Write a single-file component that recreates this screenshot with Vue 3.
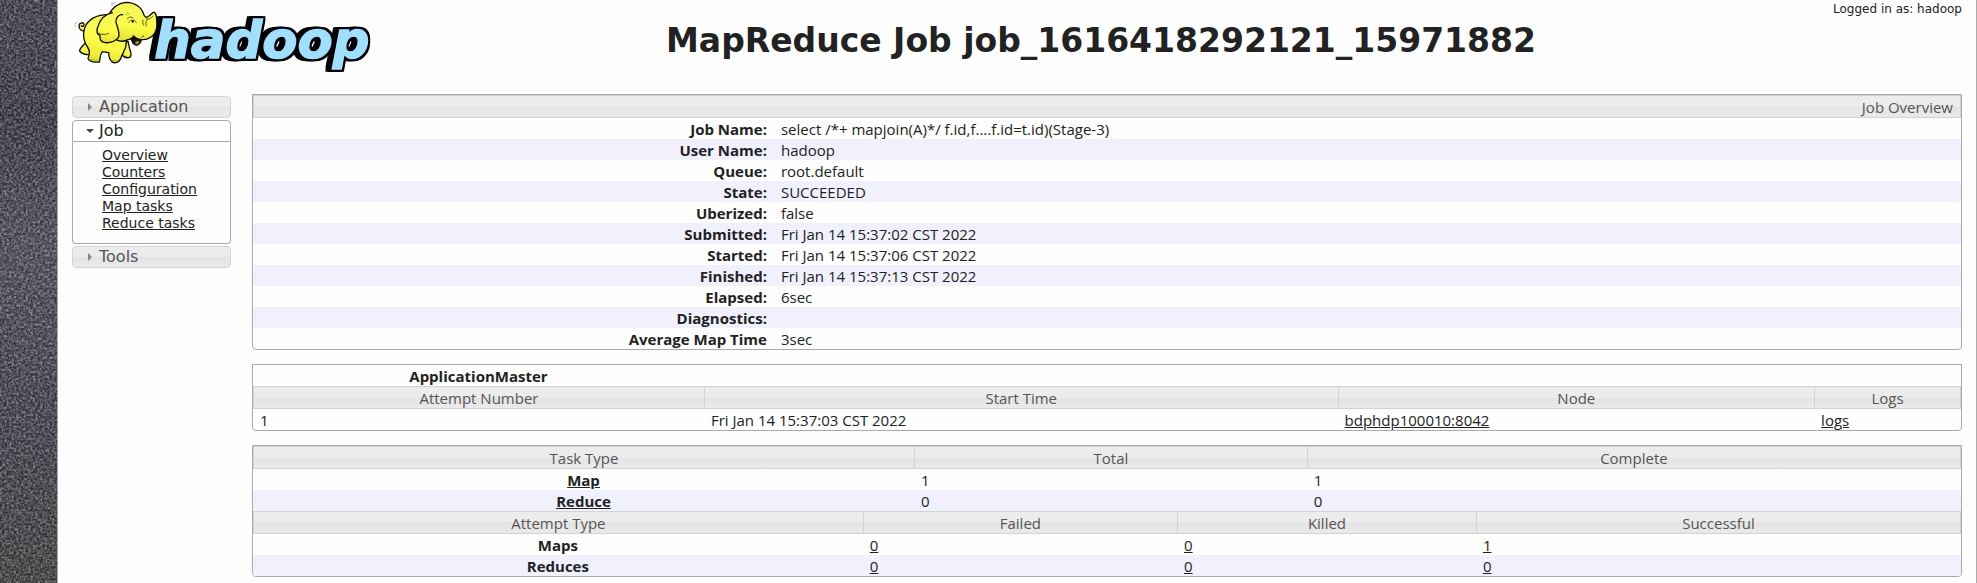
<script setup>
import { ref } from 'vue'

const jobOpen = ref(true)
const jobLinks = ['Overview', 'Counters', 'Configuration', 'Map tasks', 'Reduce tasks']

const overview = [
  ['Job Name:', 'select /*+ mapjoin(A)*/ f.id,f....f.id=t.id)(Stage-3)'],
  ['User Name:', 'hadoop'],
  ['Queue:', 'root.default'],
  ['State:', 'SUCCEEDED'],
  ['Uberized:', 'false'],
  ['Submitted:', 'Fri Jan 14 15:37:02 CST 2022'],
  ['Started:', 'Fri Jan 14 15:37:06 CST 2022'],
  ['Finished:', 'Fri Jan 14 15:37:13 CST 2022'],
  ['Elapsed:', '6sec'],
  ['Diagnostics:', ''],
  ['Average Map Time', '3sec'],
]

const tasks = [
  ['Map', 1, 1],
  ['Reduce', 0, 0],
]
const attempts = [
  ['Maps', [0, 0, 1]],
  ['Reduces', [0, 0, 0]],
]
</script>

<template>
  <div class="screen">
    <div class="backdrop" aria-hidden="true">
      <svg width="100%" height="100%">
        <defs>
          <linearGradient id="asphalt" x1="0" y1="0" x2="0" y2="1">
            <stop offset="0" stop-color="#4b4d59" />
            <stop offset="0.2" stop-color="#42434e" />
            <stop offset="0.42" stop-color="#605b68" />
            <stop offset="0.7" stop-color="#504e5a" />
            <stop offset="1" stop-color="#504b4e" />
          </linearGradient>
          <filter id="grain" x="0" y="0" width="100%" height="100%" color-interpolation-filters="sRGB">
            <feTurbulence type="fractalNoise" baseFrequency="0.42" numOctaves="3" seed="4" />
            <feColorMatrix values="1.4 1.4 0 0 -1.08  1.4 1.4 0 0 -1.08  1.4 1.4 0 0 -1.07  0 0 0 0 0.35" />
          </filter>
        </defs>
        <rect width="100%" height="100%" fill="url(#asphalt)" />
        <rect width="100%" height="100%" filter="url(#grain)" />
      </svg>
    </div>

    <div class="page">
      <header class="banner">
        <svg class="logo" viewBox="216 0 924 225" role="img" aria-label="Hadoop">
          <defs>
            <linearGradient id="hide" x1="0.6" y1="0" x2="0.35" y2="1">
              <stop offset="0" stop-color="#f5f75a" />
              <stop offset="0.6" stop-color="#fbfb48" />
              <stop offset="1" stop-color="#e2e22e" />
            </linearGradient>
            <filter id="block" x="-10%" y="-20%" width="120%" height="140%" color-interpolation-filters="sRGB">
              <feMorphology in="SourceAlpha" operator="dilate" radius="5" result="rim" />
              <feOffset in="rim" dx="-6" result="near" />
              <feOffset in="rim" dx="-13" result="far" />
              <feMerge>
                <feMergeNode in="far" />
                <feMergeNode in="near" />
                <feMergeNode in="rim" />
                <feMergeNode in="SourceGraphic" />
              </feMerge>
            </filter>
          </defs>
          <text class="wordmark" x="463" y="174" filter="url(#block)">hadoop</text>
          <g fill="url(#hide)" stroke="#0b0b00" stroke-width="4" stroke-linejoin="round" stroke-linecap="round">
            <path d="M256 92C246 96 236 88 237 77C238 67 251 65 252 74C252 80 246 81 244 77" />
            <path d="M255 130C247 139 238 146 239 153C246 162 257 165 268 163L272 140Z" />
            <path d="M384 124C387 136 388 146 392 156C394 166 393 172 386 173C376 174 370 170 366 165L362 134Z" />
            <path d="M330 44C296 43 266 55 254 83C246 107 253 128 264 144C271 154 268 166 264 176C266 184 284 188 298 186C301 174 300 164 307 155L326 158C326 170 327 180 340 188C354 190 361 180 364 171C368 157 380 149 379 125Z" />
            <path d="M391 112C397 127 401 137 412 135C422 132 426 122 421 113Z" fill="#171200" />
            <path d="M404 129C406 120 416 121 420 125C417 134 409 137 404 129Z" fill="#b9872b" stroke-width="2" />
            <path d="M326 46C336 22 357 8 379 7C404 7 426 22 432 45C435 53 442 54 448 47L458 38C465 34 469 43 470 58C473 83 468 105 446 115C432 122 412 120 400 108C397 116 390 118 384 119C373 126 360 125 346 118Z" />
            <path d="M337 38C319 42 300 56 293 82C288 96 292 104 300 106C298 118 304 126 316 128C330 129 345 124 355 113C361 98 352 81 348 67C347 56 354 42 368 44" />
            <path d="M293 98C303 105 314 105 326 100" fill="none" stroke-width="2" />
            <path d="M438 55C444 60 451 57 458 49M442 58C436 65 437 70 439 78M429 60C427 66 428 71 431 76M425 112C428 112 430 110 431 107" fill="none" stroke-width="2" />
            <path d="M382 56C388 50 395 50 399 54M386 67C393 58 402 58 409 67" fill="none" stroke-width="2" />
            <ellipse cx="398" cy="64" rx="3" ry="5" fill="#111" stroke="none" />
            <path d="M377 42L380 46M383 38L386 43M225 72L231 66M225 79L227 76M334 12L345 8M335 18L338 15" fill="none" stroke="#777" stroke-width="2" />
            <path d="M269 178L293 181M333 181L351 183" fill="none" stroke="#9d9b22" stroke-width="2" />
          </g>
        </svg>
        <div class="heading">
          <p class="user">Logged in as: hadoop</p>
          <h1>MapReduce Job job_1616418292121_15971882</h1>
        </div>
      </header>

      <div class="body">
        <nav class="menu">
          <button type="button" class="tab"><i class="arrow"></i>Application</button>
          <div>
            <button type="button" class="tab" :class="{ open: jobOpen }" :aria-expanded="jobOpen" @click="jobOpen = !jobOpen">
              <i class="arrow"></i>Job
            </button>
            <ul v-if="jobOpen">
              <li v-for="l in jobLinks" :key="l"><a href="#">{{ l }}</a></li>
            </ul>
          </div>
          <button type="button" class="tab"><i class="arrow"></i>Tools</button>
        </nav>

        <main>
          <section class="card">
            <table class="info">
              <colgroup><col class="w-key" /><col /></colgroup>
              <thead>
                <tr class="bar"><th colspan="2">Job Overview</th></tr>
              </thead>
              <tbody>
                <tr v-for="(r, i) in overview" :key="r[0]" :class="{ odd: i % 2 }">
                  <th scope="row">{{ r[0] }}</th>
                  <td>{{ r[1] }}</td>
                </tr>
              </tbody>
            </table>
          </section>

          <section class="card">
            <table>
              <colgroup><col class="w-number" /><col class="w-start" /><col class="w-node" /><col /></colgroup>
              <tbody>
                <tr><th>ApplicationMaster</th><td colspan="3"></td></tr>
                <tr class="bar"><th>Attempt Number</th><th>Start Time</th><th>Node</th><th>Logs</th></tr>
                <tr>
                  <td>1</td>
                  <td>Fri Jan 14 15:37:03 CST 2022</td>
                  <td><a href="#">bdphdp100010:8042</a></td>
                  <td><a href="#">logs</a></td>
                </tr>
              </tbody>
            </table>
          </section>

          <section class="card">
            <table>
              <colgroup><col class="w-task" /><col class="w-total" /><col /></colgroup>
              <thead>
                <tr class="bar"><th>Task Type</th><th>Total</th><th>Complete</th></tr>
              </thead>
              <tbody>
                <tr v-for="(t, i) in tasks" :key="t[0]" :class="{ odd: i % 2 }">
                  <th scope="row"><a href="#">{{ t[0] }}</a></th>
                  <td>{{ t[1] }}</td>
                  <td>{{ t[2] }}</td>
                </tr>
              </tbody>
            </table>
            <table>
              <colgroup><col class="w-attempt" /><col class="w-failed" /><col class="w-killed" /><col /></colgroup>
              <thead>
                <tr class="bar"><th>Attempt Type</th><th>Failed</th><th>Killed</th><th>Successful</th></tr>
              </thead>
              <tbody>
                <tr v-for="(a, i) in attempts" :key="a[0]" :class="{ odd: i % 2 }">
                  <th scope="row">{{ a[0] }}</th>
                  <td v-for="(n, k) in a[1]" :key="k"><a href="#">{{ n }}</a></td>
                </tr>
              </tbody>
            </table>
          </section>
        </main>
      </div>
    </div>
  </div>
</template>

<style>
body {
  margin: 0;
  background: #fefefe;
}
</style>

<style scoped>
* {
  box-sizing: border-box;
}
.screen {
  display: grid;
  grid-template-columns: 57px minmax(0, 1fr);
  min-height: 100vh;
  color: #222;
  font-family: "DejaVu Sans", Verdana, sans-serif;
}
.backdrop {
  position: relative;
  overflow: hidden;
}
.backdrop svg {
  position: absolute;
  inset: 0;
}
.page {
  border: solid #aaa;
  border-width: 0 1px;
  padding: 0 14px;
  background: #fefefe;
}
.banner {
  display: grid;
  grid-template-columns: 308px minmax(0, 1fr);
  height: 94px;
}
.logo {
  width: 308px;
  height: 75px;
  grid-area: 1 / 1;
}
.wordmark {
  font: italic bold 154px "DejaVu Sans", Verdana, sans-serif;
  fill: #a0dfff;
  stroke: #a0dfff;
  stroke-width: 4px;
  stroke-linejoin: miter;
}
.heading {
  grid-area: 1 / 1 / 2 / 3;
  padding-left: 168px;
}
.user {
  margin: 0;
  text-align: right;
  font-size: 12px;
  line-height: 18px;
}
h1 {
  margin: 3px 0 0;
  text-align: center;
  font-size: 33px;
  line-height: 40px;
}
.body {
  display: grid;
  grid-template-columns: 159px minmax(0, 1fr);
  column-gap: 21px;
}
.menu {
  display: flex;
  flex-direction: column;
  gap: 2px;
  padding-top: 2px;
}
.tab {
  display: flex;
  align-items: center;
  gap: 6px;
  width: 100%;
  height: 22px;
  padding: 0 0 0 15px;
  border: 1px solid #d3d3d3;
  border-radius: 4px;
  background: linear-gradient(#ececec 50%, #e4e4e4 50%, #eaeaea);
  color: #555;
  font: 16px/20px "DejaVu Sans", Verdana, sans-serif;
}
.tab.open {
  border-color: #aaa;
  border-radius: 4px 4px 0 0;
  background: #fff;
  color: #222;
}
.arrow {
  width: 4px;
  margin-right: 1px;
  border: solid transparent;
  border-width: 4px 0 4px 4px;
  border-left-color: #888;
}
.open .arrow {
  width: 8px;
  margin: 0 -1px 0 -2px;
  border-width: 4px 4px 0;
  border-color: #444 transparent transparent;
}
ul {
  margin: 0;
  padding: 5px 0 11px 29px;
  border: 1px solid #aaa;
  border-top: 0;
  border-radius: 0 0 4px 4px;
  list-style: none;
  font-size: 14px;
  line-height: 17px;
}
a {
  color: #222;
}
main {
  display: flex;
  flex-direction: column;
  gap: 14px;
  min-width: 0;
}
.card {
  border: 1px solid #aaa;
  border-radius: 0 0 4px 4px;
  overflow: hidden;
}
table {
  width: 100%;
  table-layout: fixed;
  border-collapse: separate;
  border-spacing: 0;
  font: 15px/20px "Open Sans", "Noto Sans", sans-serif;
}
th,
td {
  height: 21px;
  padding: 1px 7px 0;
}
td {
  text-align: left;
}
.odd {
  background: #f1f1fe;
}
.bar th {
  height: 23px;
  border: solid #d3d3d3;
  border-width: 1px 0 1px 1px;
  background: linear-gradient(#ececec 50%, #e4e4e4 50%, #eaeaea);
  color: #555;
  font-weight: normal;
}
.bar th:last-child {
  border-right-width: 1px;
}
.info th {
  text-align: right;
}
.w-key { width: 30.5%; }
.w-number { width: 26.4%; }
.w-start { width: 37.1%; }
.w-node { width: 27.9%; }
.w-task { width: 38.7%; }
.w-total { width: 23%; }
.w-attempt { width: 35.7%; }
.w-failed { width: 18.4%; }
.w-killed { width: 17.5%; }
</style>
